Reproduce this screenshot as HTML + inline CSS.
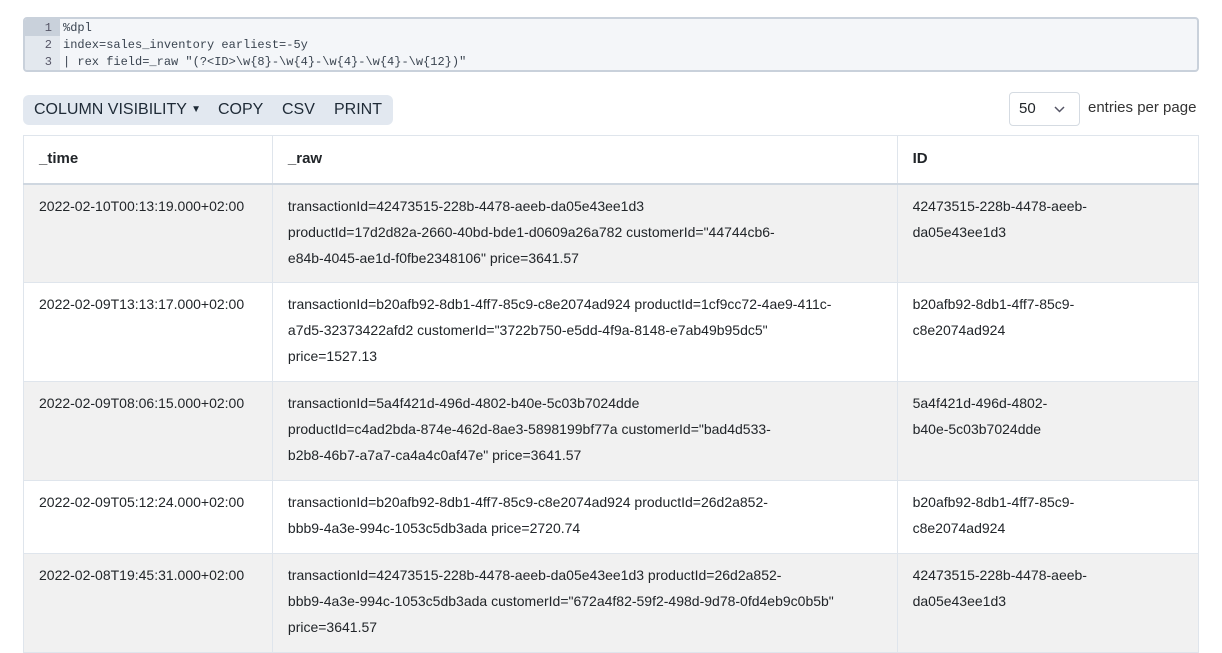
<!DOCTYPE html>
<html><head><meta charset="utf-8"><style>
*{box-sizing:border-box;margin:0;padding:0}
body{width:1222px;height:653px;overflow:hidden;background:#fff;font-family:"Liberation Sans",sans-serif;color:#212529;position:relative}
.code{position:absolute;left:23px;top:17px;width:1176px;height:55px;border:2px solid #c9d1db;border-radius:4px;background:#f4f6f9;font-family:"Liberation Mono",monospace;font-size:12px;color:#3a4450;overflow:hidden}
.code .g{position:absolute;left:0;top:0;width:35px;height:100%;background:#e3e8ee}
.code .ln{position:absolute;left:0;width:33px;height:17px;line-height:17px;text-align:right;padding-right:6px;color:#556}
.code .tx{position:absolute;left:38px;height:17px;line-height:17px;white-space:pre}
.btns{position:absolute;left:23px;top:95px;width:370px;height:30px;background:#e2e8f0;border-radius:6px;font-size:16px;font-weight:500;color:#1e2a36;line-height:30px}
.btns span{position:absolute;top:0}
.sel{position:absolute;left:1009px;top:92px;width:71px;height:34px;border:1px solid #d5dbe2;border-radius:4px;font-size:15px;line-height:32px;padding-left:9px}
.epp{position:absolute;left:1088px;top:99px;font-size:15px;color:#333}
table{position:absolute;left:23px;top:135px;width:1176px;border-collapse:collapse;font-size:14px}
td,th{border:1px solid #dfe5ec;vertical-align:top;text-align:left;padding:8px 15px 10px;line-height:26px;white-space:nowrap}
th{height:48px;border-bottom:2px solid #cfd7e0;font-weight:bold;padding:10px 15px 9px;font-size:15px}
tr.o td{background:#f1f1f1}
</style></head><body>
<div class="code"><div class="g"></div><div style="position:absolute;left:0;top:0;width:35px;height:17px;background:#c9d1db"></div>
<div class="ln" style="top:1px">1</div><div class="ln" style="top:18px">2</div><div class="ln" style="top:35px">3</div>
<div class="tx" style="top:1px">%dpl</div>
<div class="tx" style="top:18px">index=sales_inventory earliest=-5y</div>
<div class="tx" style="top:35px">| rex field=_raw "(?&lt;ID&gt;\w{8}-\w{4}-\w{4}-\w{4}-\w{12})"</div></div>
<div class="btns"><span style="left:11px">COLUMN VISIBILITY <span style="position:static;font-size:10px;vertical-align:2px">▼</span></span><span style="left:195px">COPY</span><span style="left:259px">CSV</span><span style="left:311px">PRINT</span></div>
<div class="sel">50 <svg style="position:absolute;left:44px;top:13px" width="11" height="7" viewBox="0 0 11 7"><path d="M1 1l4.5 4.5L10 1" fill="none" stroke="#556" stroke-width="1.5"/></svg></div>
<div class="epp">entries per page</div>
<table>
<colgroup><col style="width:249px"><col style="width:625px"><col style="width:302px"></colgroup>
<tr style="height:48px"><th>_time</th><th>_raw</th><th>ID</th></tr>
<tr class="o" style="height:99px"><td>2022-02-10T00:13:19.000+02:00</td><td>transactionId=42473515-228b-4478-aeeb-da05e43ee1d3<br>productId=17d2d82a-2660-40bd-bde1-d0609a26a782 customerId="44744cb6-<br>e84b-4045-ae1d-f0fbe2348106" price=3641.57</td><td>42473515-228b-4478-aeeb-<br>da05e43ee1d3</td></tr>
<tr style="height:99px"><td>2022-02-09T13:13:17.000+02:00</td><td>transactionId=b20afb92-8db1-4ff7-85c9-c8e2074ad924 productId=1cf9cc72-4ae9-411c-<br>a7d5-32373422afd2 customerId="3722b750-e5dd-4f9a-8148-e7ab49b95dc5"<br>price=1527.13</td><td>b20afb92-8db1-4ff7-85c9-<br>c8e2074ad924</td></tr>
<tr class="o" style="height:99px"><td>2022-02-09T08:06:15.000+02:00</td><td>transactionId=5a4f421d-496d-4802-b40e-5c03b7024dde<br>productId=c4ad2bda-874e-462d-8ae3-5898199bf77a customerId="bad4d533-<br>b2b8-46b7-a7a7-ca4a4c0af47e" price=3641.57</td><td>5a4f421d-496d-4802-<br>b40e-5c03b7024dde</td></tr>
<tr style="height:73px"><td>2022-02-09T05:12:24.000+02:00</td><td>transactionId=b20afb92-8db1-4ff7-85c9-c8e2074ad924 productId=26d2a852-<br>bbb9-4a3e-994c-1053c5db3ada price=2720.74</td><td>b20afb92-8db1-4ff7-85c9-<br>c8e2074ad924</td></tr>
<tr class="o" style="height:99px"><td>2022-02-08T19:45:31.000+02:00</td><td>transactionId=42473515-228b-4478-aeeb-da05e43ee1d3 productId=26d2a852-<br>bbb9-4a3e-994c-1053c5db3ada customerId="672a4f82-59f2-498d-9d78-0fd4eb9c0b5b"<br>price=3641.57</td><td>42473515-228b-4478-aeeb-<br>da05e43ee1d3</td></tr>
</table>
</body></html>
